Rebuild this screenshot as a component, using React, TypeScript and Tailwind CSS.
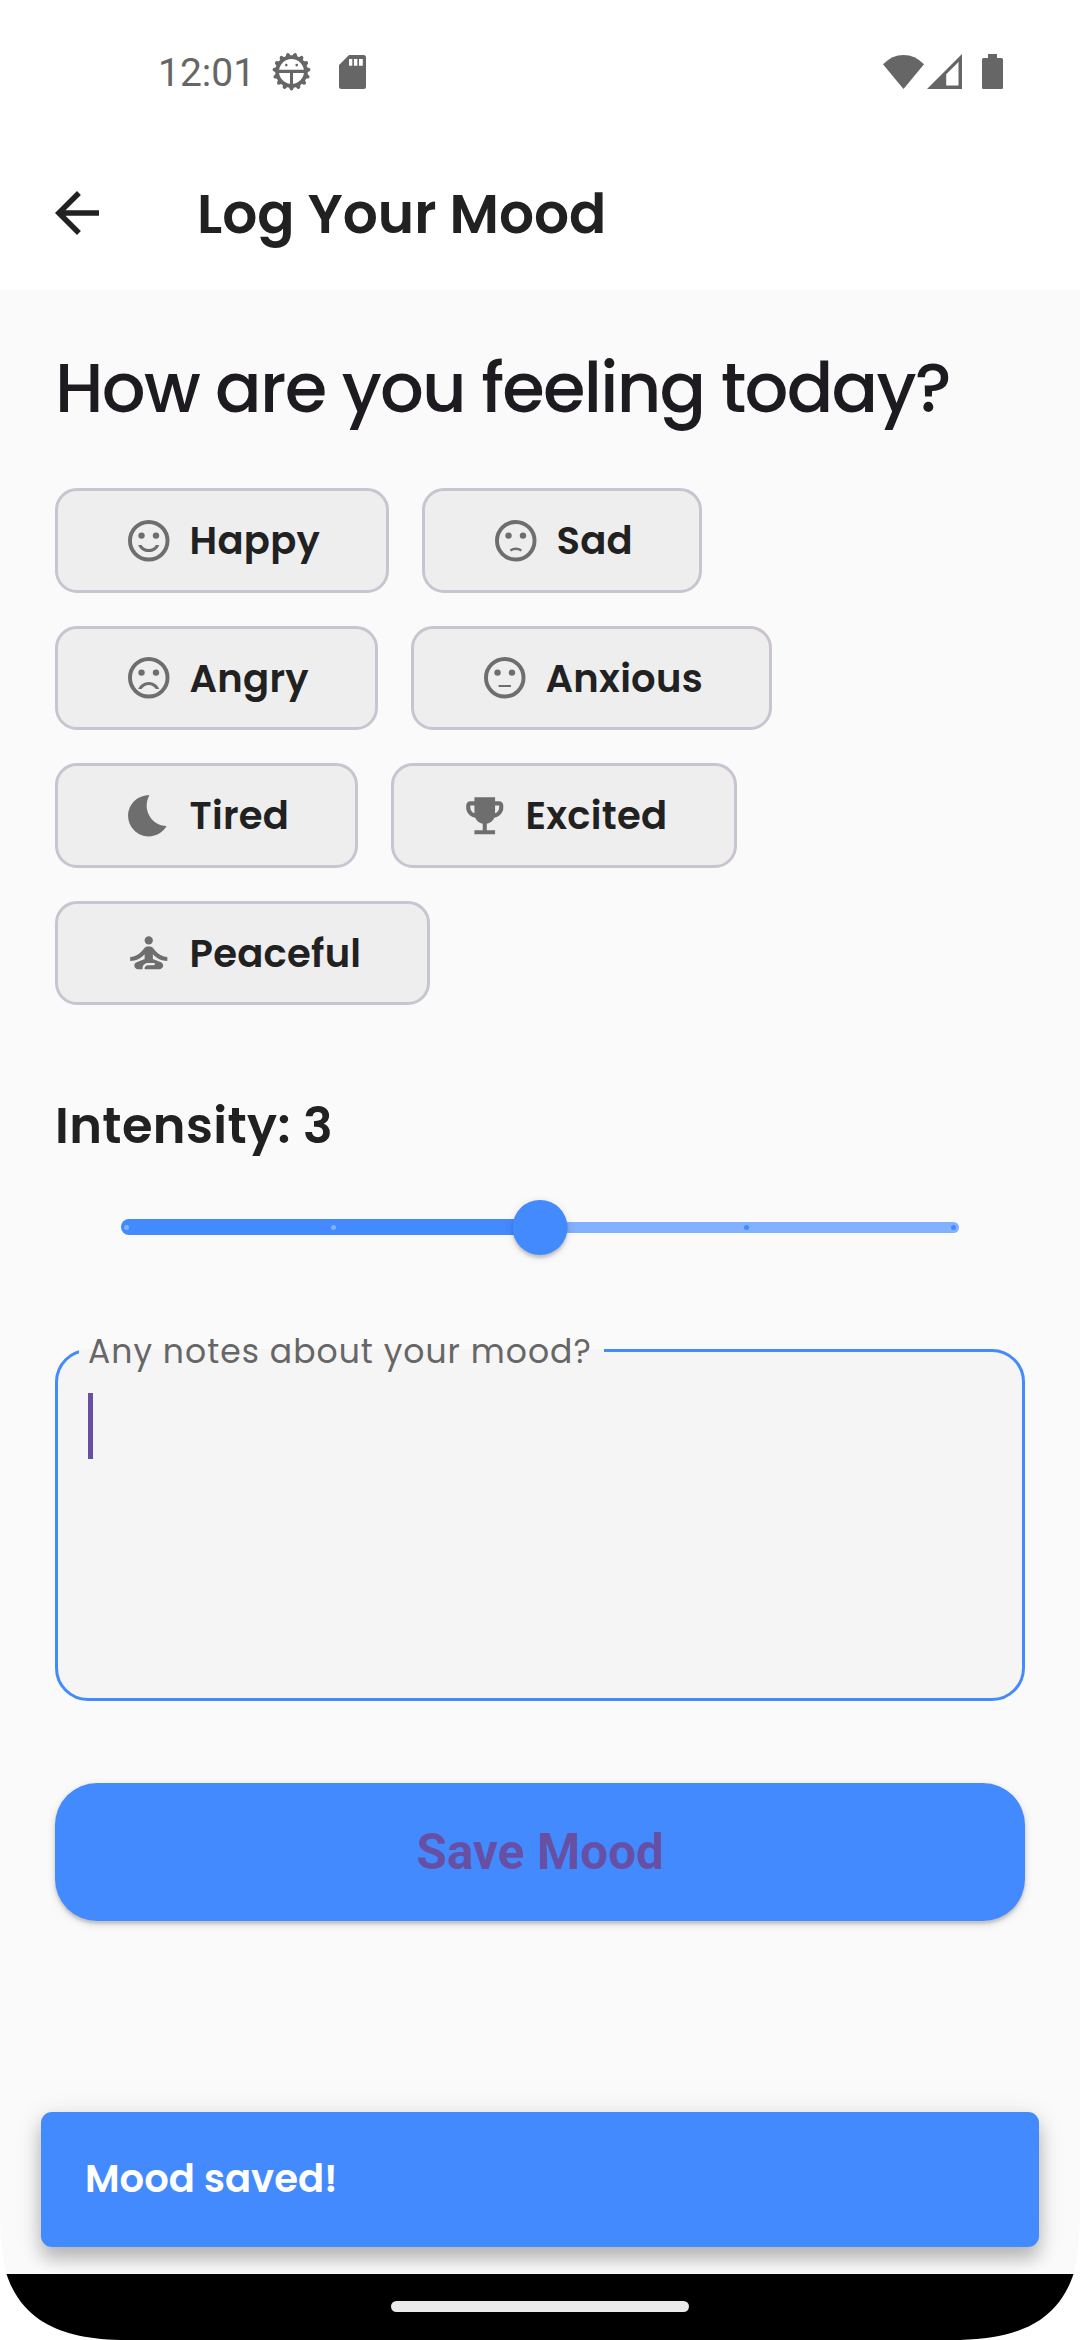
import { useState, type ReactNode } from "react";

const faceRing = (
  <>
    <circle cx="12" cy="12" r="9.1" fill="none" stroke="currentColor" strokeWidth="1.9" />
    <circle cx="8.5" cy="9.5" r="1.55" />
    <circle cx="15.5" cy="9.5" r="1.55" />
  </>
);

type Mood = { label: string; width: string; icon: ReactNode };

const moodRows: Mood[][] = [
  [
    {
      label: "Happy",
      width: "w-[334px]",
      icon: (
        <>
          {faceRing}
          <path d="M12 16c-1.48 0-2.75-.81-3.45-2H6.88c.8 2.05 2.79 3.5 5.12 3.5s4.32-1.45 5.12-3.5h-1.67c-.7 1.19-1.97 2-3.45 2z" />
        </>
      ),
    },
    {
      label: "Sad",
      width: "w-[280px]",
      icon: (
        <>
          {faceRing}
          <path d="M9.4 16.7Q12 15.1 14.7 16.7" fill="none" stroke="currentColor" strokeWidth="1.2" />
        </>
      ),
    },
  ],
  [
    {
      label: "Angry",
      width: "w-[323px]",
      icon: (
        <>
          {faceRing}
          <path d="M12 14c-2.33 0-4.32 1.45-5.12 3.5h1.67c.69-1.19 1.97-2 3.45-2s2.75.81 3.45 2h1.67c-.8-2.05-2.79-3.5-5.12-3.5z" />
        </>
      ),
    },
    {
      label: "Anxious",
      width: "w-[361px]",
      icon: (
        <>
          {faceRing}
          <path d="M9 15.5h6v1H9z" />
        </>
      ),
    },
  ],
  [
    {
      label: "Tired",
      width: "w-[303px]",
      icon: (
        <path d="M12.34 2.02C6.59 1.82 2 6.42 2 12c0 5.52 4.48 10 10 10 3.71 0 6.93-2.02 8.66-5.02-7.51-.25-12.09-8.43-8.32-14.96z" />
      ),
    },
    {
      label: "Excited",
      width: "w-[346px]",
      icon: (
        <path d="M19 5h-2V3H7v2H5c-1.1 0-2 .9-2 2v1c0 2.55 1.92 4.63 4.39 4.94.63 1.5 1.98 2.63 3.61 2.96V19H7v2h10v-2h-4v-3.1c1.63-.33 2.98-1.46 3.61-2.96C19.08 12.63 21 10.55 21 8V7c0-1.1-.9-2-2-2zM5 8V7h2v3.82C5.84 10.4 5 9.3 5 8zm14 0c0 1.3-.84 2.4-2 2.82V7h2v1z" />
      ),
    },
  ],
  [
    {
      label: "Peaceful",
      width: "w-[375px]",
      icon: (
        <>
          <circle cx="12" cy="6" r="2" />
          <path d="M21 16v-2c-2.24 0-4.16-.96-5.6-2.68l-1.34-1.6c-.38-.46-.94-.72-1.53-.72h-1.05c-.59 0-1.15.26-1.53.72l-1.34 1.6C7.16 13.04 5.24 14 3 14v2c2.77 0 5.19-1.17 7-3.25V15l-3.88 1.55c-.67.27-1.12.93-1.12 1.66C5 19.2 5.8 20 6.79 20H9v-.5c0-1.38 1.12-2.5 2.5-2.5h3c.28 0 .5.22.5.5s-.22.5-.5.5h-3c-.83 0-1.5.67-1.5 1.5v.5h7.1c.99 0 1.9-.81 1.9-1.79 0-.73-.45-1.39-1.12-1.66L14 15v-2.25c1.81 2.08 4.23 3.25 7 3.25z" />
        </>
      ),
    },
  ],
];

const gearTeeth = Array.from({ length: 15 }, (_, i) => i * 24 + 12);

function StatusBar() {
  return (
    <div className="flex h-[136px] items-center bg-white pt-[7px] pl-[158px] text-[#666666]">
      <span className="w-[114px] pt-[3px] font-['Roboto'] text-[39px] leading-none whitespace-nowrap">12:01</span>
      <svg className="size-[39px]" viewBox="-19.5 -19.5 39 39" fill="currentColor">
        {gearTeeth.map((a) => (
          <path key={a} d="M-3.2 -14L-1.5 -18.2Q0 -19.8 1.5 -18.2L3.2 -14z" transform={`rotate(${a})`} />
        ))}
        <circle r="14.4" fill="none" stroke="currentColor" strokeWidth="3.8" />
        <path d="M-13 -1.8H13V1.5H-13zM-1.5 0H1.5V14H-1.5z" />
        <circle cx="-5.2" cy="-6.4" r="1.3" />
        <circle cx="5.2" cy="-6.4" r="1.3" />
      </svg>
      <svg className="ml-7 h-[34px] w-[27px]" viewBox="0 0 27 34" fill="currentColor">
        <path
          fillRule="evenodd"
          d="M10 0H24.500Q27 0 27 2.500V31.500Q27 34 24.500 34H2.500Q0 34 0 31.500V10zM10 4V10.700H13.300V4zM14.900 4V10.700H18.400V4zM20 4V10.700H23.800V4z"
        />
      </svg>
      <div className="ml-auto flex items-center pr-[77px]">
        <svg className="h-[34px] w-[41px]" viewBox="0 0 41 34" fill="currentColor">
          <path d="M0 9.300Q9 0 20.500 0T41 9.300L20.500 34z" />
        </svg>
        <svg className="ml-[3px] h-[35px] w-[35px]" viewBox="0 0 35 35" fill="currentColor">
          <path fillRule="evenodd" d="M35 0V35H0zM31.500 8L19.200 20.300V31.400H31.500z" />
        </svg>
        <svg className="ml-5 h-[35px] w-[21px]" viewBox="0 0 21 35" fill="currentColor">
          <path d="M6 0H15V4H19.500Q21 4 21 5.500V33.500Q21 35 19.500 35H1.500Q0 35 0 33.500V5.500Q0 4 1.500 4H6z" />
        </svg>
      </div>
    </div>
  );
}

function AppBar() {
  return (
    <header className="flex h-[154px] items-center bg-white pl-11 text-[#212121]">
      <button aria-label="Back" className="mr-[87px]">
        <svg className="size-[66px]" viewBox="0 0 24 24" fill="currentColor">
          <path d="M20 11H7.830l5.590-5.590L12 4l-8 8 8 8 1.410-1.410L7.830 13H20v-2z" />
        </svg>
      </button>
      <h1 className="text-[55px] leading-none font-semibold whitespace-nowrap">Log Your Mood</h1>
    </header>
  );
}

function MoodChip({ mood }: { mood: Mood }) {
  return (
    <button
      className={`flex h-full items-center rounded-[22px] border-[3px] border-[#cac4d0] bg-[#eeeeee] pl-[66px] ${mood.width}`}
    >
      <svg className="mr-4 size-[49.5px] shrink-0 text-[#6e6e6e]" viewBox="0 0 24 24" fill="currentColor">
        {mood.icon}
      </svg>
      <span className="pt-0.5 text-[38.5px] leading-none font-semibold tracking-[0.275px] whitespace-nowrap text-[#212121]">
        {mood.label}
      </span>
    </button>
  );
}

function IntensitySlider({ value }: { value: number }) {
  return (
    <div className="relative mx-[66px] flex h-[132px] items-center">
      <div className="h-4 flex-1 rounded-l-full bg-[#448aff]" />
      <div className="h-[11px] flex-1 rounded-r-full bg-[#82b1ff]" />
      <div className="absolute inset-x-[3px] flex justify-between">
        {[1, 2, 3, 4, 5].map((step) => (
          <span
            key={step}
            className={step <= value ? "size-[5px] rounded-full bg-[#82b1ff]" : "size-[5px] rounded-full bg-[#448aff]"}
          />
        ))}
      </div>
      <div className="absolute left-1/2 size-[55px] -translate-x-1/2 rounded-full bg-[#448aff] shadow-[0_3px_3px_rgba(0,0,0,0.16),0_2px_8px_rgba(0,0,0,0.12)]" />
    </div>
  );
}

export default function App() {
  const [intensity] = useState(3);

  return (
    <div className="relative flex h-[2340px] w-[1080px] flex-col overflow-hidden bg-[#fafafa] font-['Poppins','Inter',sans-serif]">
      <StatusBar />
      <AppBar />

      <main className="relative flex flex-1 flex-col px-[55px] pt-[55px]">
        <h2 className="h-[86px] text-[68.75px] leading-[86px] font-medium tracking-[-1.7px] whitespace-nowrap text-[#1d1b20]">
          How are you feeling today?
        </h2>

        <div className="mt-[57px] flex h-[517px] flex-col gap-[33px]">
          {moodRows.map((row) => (
            <div key={row[0].label} className="flex flex-1 gap-[33px]">
              {row.map((mood) => (
                <MoodChip key={mood.label} mood={mood} />
              ))}
            </div>
          ))}
        </div>

        <h3 className="mt-[85px] h-[71px] text-[49.5px] leading-[72px] font-semibold tracking-[0.4px] whitespace-nowrap text-[#212121]">
          Intensity: {intensity}
        </h3>
        <IntensitySlider value={intensity} />

        <fieldset className="mt-[34px] h-[374px] rounded-[33px] border-[3px] border-[#448aff] bg-[#f5f5f5] pl-[21px]">
          <legend className="h-[47px] w-[525px] pl-[9px] text-[33px] leading-[49px] tracking-[1.03px] whitespace-nowrap text-[#666666]">
            Any notes about your mood?
          </legend>
          <div className="mt-[19px] ml-[9px] h-[66px] w-[5px] bg-[#6750a4]" />
        </fieldset>

        <button className="mt-[82px] h-[138px] rounded-[42px] bg-[#448aff] pt-0.5 font-['Roboto'] text-[49.5px] leading-none font-bold text-[#6750a4] shadow-[0_3px_3px_rgba(0,0,0,0.14),0_3px_8px_rgba(0,0,0,0.14)]">
          Save Mood
        </button>

        <div className="absolute inset-x-[41px] bottom-[27px] flex h-[135px] items-center rounded-[11px] bg-[#448aff] pl-11 text-[38.5px] leading-none font-semibold whitespace-nowrap text-white shadow-[0_12px_18px_rgba(0,0,0,0.22),0_4px_26px_rgba(0,0,0,0.12)]">
          Mood saved!
        </div>
      </main>

      <nav className="relative flex h-[66px] items-center justify-center bg-black">
        <div className="mt-[-1px] h-[11px] w-[298px] rounded-full bg-[#ebebeb]" />
      </nav>

      <svg className="absolute bottom-0 left-0 h-[130px] w-[120px]" viewBox="0 0 120 130" fill="white">
        <path d="M0 0C0 25 2 46 6.500 64C14 87 27 101 40 110C60 123 85 129 120 130H0z" />
      </svg>
      <svg className="absolute right-0 bottom-0 h-[130px] w-[120px] -scale-x-100" viewBox="0 0 120 130" fill="white">
        <path d="M0 0C0 25 2 46 6.500 64C14 87 27 101 40 110C60 123 85 129 120 130H0z" />
      </svg>
    </div>
  );
}
